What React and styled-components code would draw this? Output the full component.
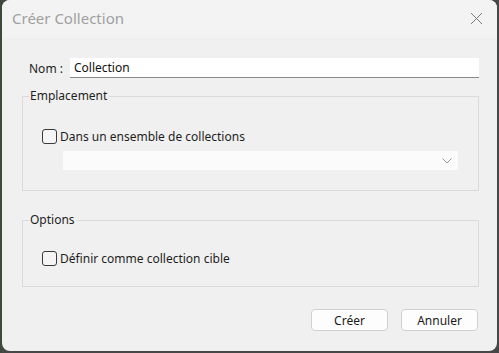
import React from "react";
import styled, { createGlobalStyle } from "styled-components";

const Global = createGlobalStyle`
  html, body { margin: 0; padding: 0; }
  body {
    background: #474747;
    width: 499px;
    height: 353px;
    overflow: hidden;
    font-family: "Noto Sans", "Open Sans", sans-serif;
  }
`;

const Page = styled.div`
  width: 499px;
  height: 353px;
  display: flex;
  background: linear-gradient(90deg, #3c4a3a 0px, #3c4a3a 2px, #474747 2px);
`;

const Dialog = styled.div`
  margin-left: 2px;
  width: 495px;
  height: 351px;
  background: #f0f0f0;
  border-radius: 8px;
  overflow: hidden;
  display: flex;
  flex-direction: column;
`;

const TitleBar = styled.div`
  height: 38px;
  flex: none;
  background: #f3f3f3;
  display: flex;
  align-items: center;
  justify-content: space-between;
  padding: 0 14px 0 10px;
`;

const Title = styled.div`
  font-size: 15px;
  color: #a0a0a0;
  margin-top: -2px;
`;

const CloseButton = styled.div`
  width: 14px;
  height: 14px;
  display: flex;
  align-items: center;
  justify-content: center;
  margin-top: -2px;
`;

const Body = styled.div`
  flex: 1;
  display: flex;
  flex-direction: column;
  padding: 0 18px 0 20px;
  font-size: 12px;
  color: #1e1e1e;
`;

const NameRow = styled.div`
  display: flex;
  align-items: center;
  gap: 7px;
  margin-top: 20px;
  padding-left: 7px;
`;

const Label = styled.span`
  font-size: 12px;
  color: #1e1e1e;
  white-space: nowrap;
`;

const TextInput = styled.div`
  flex: 1;
  height: 19px;
  background: #ffffff;
  border-bottom: 1px solid #8a8a8a;
  display: flex;
  align-items: center;
  padding-left: 4px;
  font-size: 12px;
  color: #111;
`;

const Group = styled.fieldset`
  margin: ${(p) => p.$top}px 0 0 0;
  padding: 0;
  border: 1px solid #dadada;
  height: ${(p) => p.$h}px;
  box-sizing: border-box;
  min-width: 0;
  display: flex;
  flex-direction: column;
`;

const Legend = styled.legend`
  margin-left: 6px;
  padding: 0 2px 0 1px;
  font-size: 12px;
  color: #1e1e1e;
  line-height: 14px;
`;

const CheckRow = styled.label`
  display: flex;
  align-items: center;
  gap: 3px;
  margin: ${(p) => p.$top}px 0 0 19px;
`;

const Box = styled.span`
  width: 13px;
  height: 13px;
  border: 1px solid #3a3a3a;
  border-radius: 3px;
  background: #f5f5f5;
  flex: none;
`;

const Select = styled.div`
  margin: 6px 20px 0 40px;
  height: 19px;
  background: #fbfbfb;
  display: flex;
  align-items: center;
  justify-content: flex-end;
  padding-right: 6px;
`;

const Footer = styled.div`
  display: flex;
  justify-content: flex-end;
  gap: 13px;
  margin-top: 22px;
  padding-right: 1px;
`;

const Button = styled.div`
  width: 75px;
  height: 20px;
  background: #fdfdfd;
  border: 1px solid #d0d0d0;
  border-radius: 4px;
  display: flex;
  align-items: center;
  justify-content: center;
  font-size: 12px;
  color: #1a1a1a;
`;

export default function App() {
  return (
    <>
      <Global />
      <Page>
        <Dialog>
          <TitleBar>
            <Title>Créer Collection</Title>
            <CloseButton>
              <svg width="13" height="13" viewBox="0 0 13 13">
                <path d="M1 1 L12 12 M12 1 L1 12" stroke="#7a7a7a" strokeWidth="1" fill="none" />
              </svg>
            </CloseButton>
          </TitleBar>
          <Body>
            <NameRow>
              <Label>Nom :</Label>
              <TextInput>Collection</TextInput>
            </NameRow>
            <Group $top={11} $h={102}>
              <Legend>Emplacement</Legend>
              <CheckRow $top={25}>
                <Box />
                <Label>Dans un ensemble de collections</Label>
              </CheckRow>
              <Select>
                <svg width="10" height="6" viewBox="0 0 10 6">
                  <path d="M0.5 0.5 L5 5 L9.5 0.5" stroke="#9a9a9a" strokeWidth="1" fill="none" />
                </svg>
              </Select>
            </Group>
            <Group $top={22} $h={74}>
              <Legend>Options</Legend>
              <CheckRow $top={23}>
                <Box />
                <Label>Définir comme collection cible</Label>
              </CheckRow>
            </Group>
            <Footer>
              <Button>Créer</Button>
              <Button>Annuler</Button>
            </Footer>
          </Body>
        </Dialog>
      </Page>
    </>
  );
}
